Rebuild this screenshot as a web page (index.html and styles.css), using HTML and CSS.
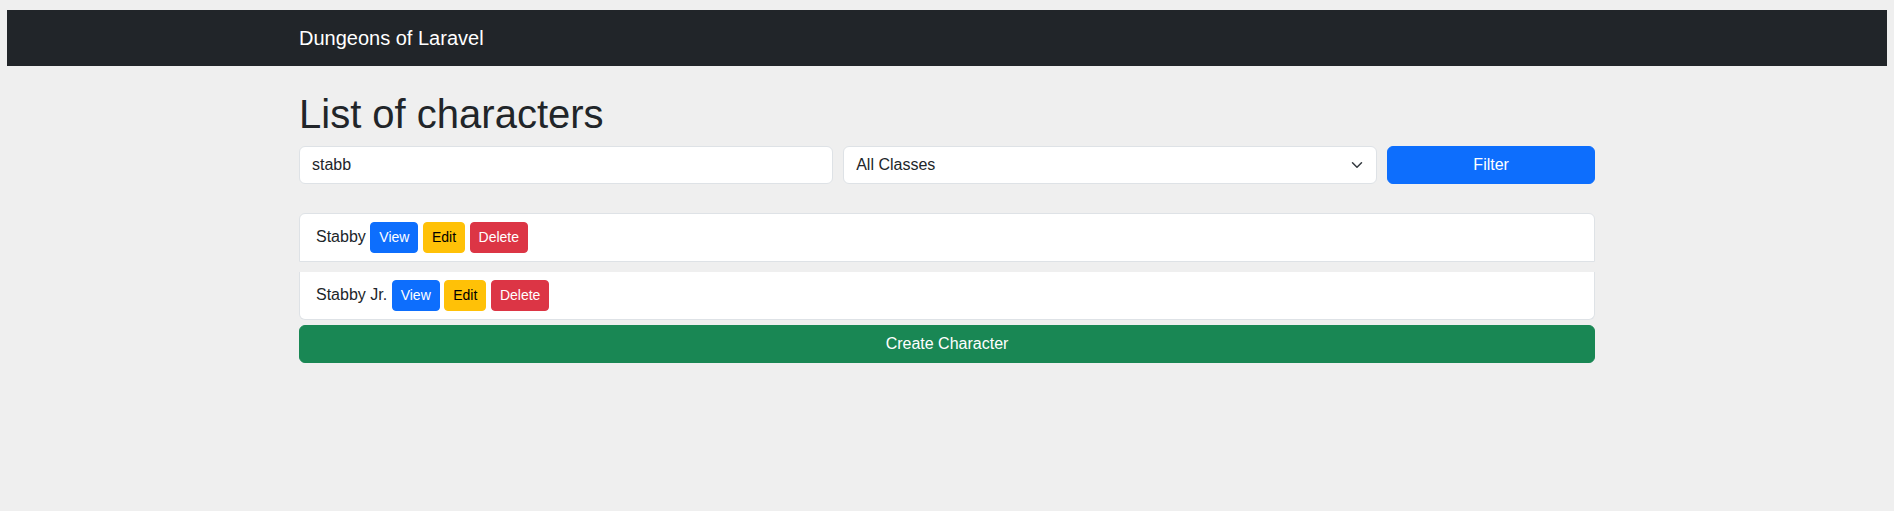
FILE: index.html
```html
<!DOCTYPE html>
<html lang="en">
<head>
<meta charset="utf-8">
<title>Dungeons of Laravel</title>
<link rel="stylesheet" href="styles.css">
</head>
<body>
<nav class="navbar">
  <div class="container">
    <a class="brand" href="#">Dungeons of Laravel</a>
  </div>
</nav>
<main class="container main">
  <h1 class="title">List of characters</h1>
  <form class="filter-row">
    <div class="col col-5">
      <input class="field" type="text" value="stabb">
    </div>
    <div class="col col-5">
      <div class="select-wrap">
        <select class="field select">
          <option>All Classes</option>
        </select>
        <svg class="chevron" width="16" height="12" viewBox="0 0 16 16"><path d="m2 5 6 6 6-6" fill="none" stroke="#343a40" stroke-width="2" stroke-linecap="round" stroke-linejoin="round"/></svg>
      </div>
    </div>
    <div class="col col-2">
      <button type="button" class="btn btn-primary btn-block">Filter</button>
    </div>
  </form>
  <ul class="list">
    <li class="item">
      <span class="name">Stabby</span>
      <a class="btn btn-sm btn-primary" href="#">View</a>
      <a class="btn btn-sm btn-warning" href="#">Edit</a>
      <a class="btn btn-sm btn-danger" href="#">Delete</a>
    </li>
    <li class="item">
      <span class="name">Stabby Jr.</span>
      <a class="btn btn-sm btn-primary" href="#">View</a>
      <a class="btn btn-sm btn-warning" href="#">Edit</a>
      <a class="btn btn-sm btn-danger" href="#">Delete</a>
    </li>
  </ul>
  <a class="btn btn-success btn-block create" href="#">Create Character</a>
</main>
</body>
</html>
```
FILE: styles.css
```css
* { box-sizing: border-box; }
html { background: #efefef; }
body {
  margin: 10px 7px 0;
  font-family: "Liberation Sans", Arial, sans-serif;
  font-size: 16px;
  line-height: 1.5;
  color: #212529;
  background: #efefef;
}
.container {
  max-width: 1320px;
  margin: 0 auto;
  padding: 0 12px;
}
.navbar {
  background: #212529;
  padding: 8px 0;
}
.brand {
  display: inline-block;
  color: #fff;
  text-decoration: none;
  font-size: 20px;
  line-height: 30px;
  padding: 5px 0;
}
.main { margin-top: 24px; }
.title {
  margin: 0 0 8px;
  font-size: 40px;
  line-height: 48px;
  font-weight: 400;
}
.filter-row {
  display: flex;
  margin: 0 -5px 29px;
}
.col { padding: 0 5px; }
.col-5 { width: 41.6667%; }
.col-2 { width: 16.6667%; }
.field {
  display: block;
  width: 100%;
  height: 38px;
  padding: 6px 12px;
  font: inherit;
  color: #212529;
  background: #fff;
  border: 1px solid #dee2e6;
  border-radius: 6px;
  outline: none;
}
.select-wrap { position: relative; }
.select {
  appearance: none;
  -webkit-appearance: none;
  padding-right: 36px;
}
.chevron {
  position: absolute;
  right: 12px;
  top: 13px;
  pointer-events: none;
}
.btn {
  display: inline-block;
  font-family: inherit;
  font-size: 16px;
  line-height: 24px;
  padding: 6px 12px;
  border: 1px solid transparent;
  border-radius: 6px;
  text-align: center;
  text-decoration: none;
  cursor: pointer;
}
.btn-block { display: block; width: 100%; }
.btn-sm {
  font-size: 14px;
  line-height: 21px;
  padding: 4px 8px;
  border-radius: 4px;
}
.btn-primary { background: #0d6efd; border-color: #0d6efd; color: #fff; }
.btn-warning { background: #ffc107; border-color: #ffc107; color: #000; }
.btn-danger { background: #dc3545; border-color: #dc3545; color: #fff; }
.btn-success { background: #198754; border-color: #198754; color: #fff; }
.list {
  list-style: none;
  margin: 0;
  padding: 0;
}
.item {
  display: flex;
  align-items: baseline;
  gap: 4.5px;
  padding: 8px 16px;
  background: #fff;
  border: 1px solid #dee2e6;
}
.item:first-child { border-radius: 6px 6px 0 0; }
.item + .item {
  margin-top: 10px;
  border-top-width: 0;
}
.item:last-child { border-radius: 0 0 6px 6px; }
.create { margin-top: 5px; }
```
